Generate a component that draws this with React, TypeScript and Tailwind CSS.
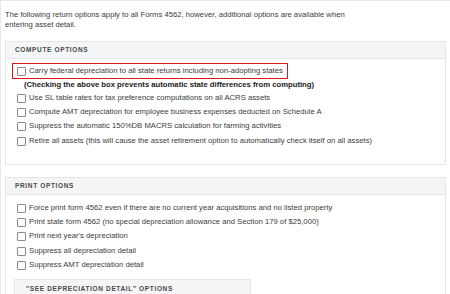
const Box = () => (
  <span className="inline-block w-[9px] h-[9px] border border-[#8a8a8a] rounded-[1px] bg-white shrink-0" />
);

const Option = ({ label }: { label: string }) => (
  <div className="flex items-center gap-[3px] h-[14px]">
    <Box />
    <span>{label}</span>
  </div>
);

const SectionHeader = ({ title }: { title: string }) => (
  <div className="h-[17px] flex items-center pl-[9px] bg-[#f4f5f6] border-b border-[#e6e6e6] text-[6.5px] font-bold tracking-[0.1em] text-[#4a4a4a]">
    {title}
  </div>
);

export default function App() {
  return (
    <div className="w-[450px] h-[294px] overflow-hidden bg-white border-l border-t border-[#e8e8e8] font-['Liberation_Sans',Arial,sans-serif] text-[7.7px] text-[#3c3c3c]">
      <p className="pl-[4px] pt-[9px] leading-[9.5px]">
        The following return options apply to all Forms 4562, however, additional options are available when
        <br />
        entering asset detail.
      </p>

      <section className="ml-[4px] mt-[12px] w-[441px] border border-[#e6e6e6]">
        <SectionHeader title="COMPUTE OPTIONS" />
        <div className="pt-[4px] pb-[16px] pl-[6px]">
          <div className="w-[276px] h-[16px] border-[1.5px] border-[#e0141b] flex items-center pl-[4px] gap-[3px]">
            <Box />
            <span>Carry federal depreciation to all state returns including non-adopting states</span>
          </div>
          <div className="h-[12px] flex items-center pl-[12px] font-bold text-[#222]">
            (Checking the above box prevents automatic state differences from computing)
          </div>
          <div className="pl-[5px]">
            <Option label="Use SL table rates for tax preference computations on all ACRS assets" />
            <Option label="Compute AMT depreciation for employee business expenses deducted on Schedule A" />
            <Option label="Suppress the automatic 150%DB MACRS calculation for farming activities" />
            <div className="h-[1px]" />
            <Option label="Retire all assets (this will cause the asset retirement option to automatically check itself on all assets)" />
          </div>
        </div>
      </section>

      <section className="ml-[4px] mt-[12px] w-[441px] border border-[#e6e6e6]">
        <SectionHeader title="PRINT OPTIONS" />
        <div className="pt-[6px] pl-[11px]">
          <Option label="Force print form 4562 even if there are no current year acquisitions and no listed property" />
          <Option label="Print state form 4562 (no special depreciation allowance and Section 179 of $25,000)" />
          <Option label="Print next year's depreciation" />
          <div className="h-[1px]" />
          <Option label="Suppress all depreciation detail" />
          <Option label="Suppress AMT depreciation detail" />
          <div className="mt-[7px] ml-[-3px] w-[237px] border border-[#e6e6e6]">
            <div className="h-[18px] flex items-center pl-[11px] bg-[#f4f5f6] text-[6.5px] font-bold tracking-[0.1em] text-[#4a4a4a]">
              "SEE DEPRECIATION DETAIL" OPTIONS
            </div>
          </div>
        </div>
      </section>
    </div>
  );
}
